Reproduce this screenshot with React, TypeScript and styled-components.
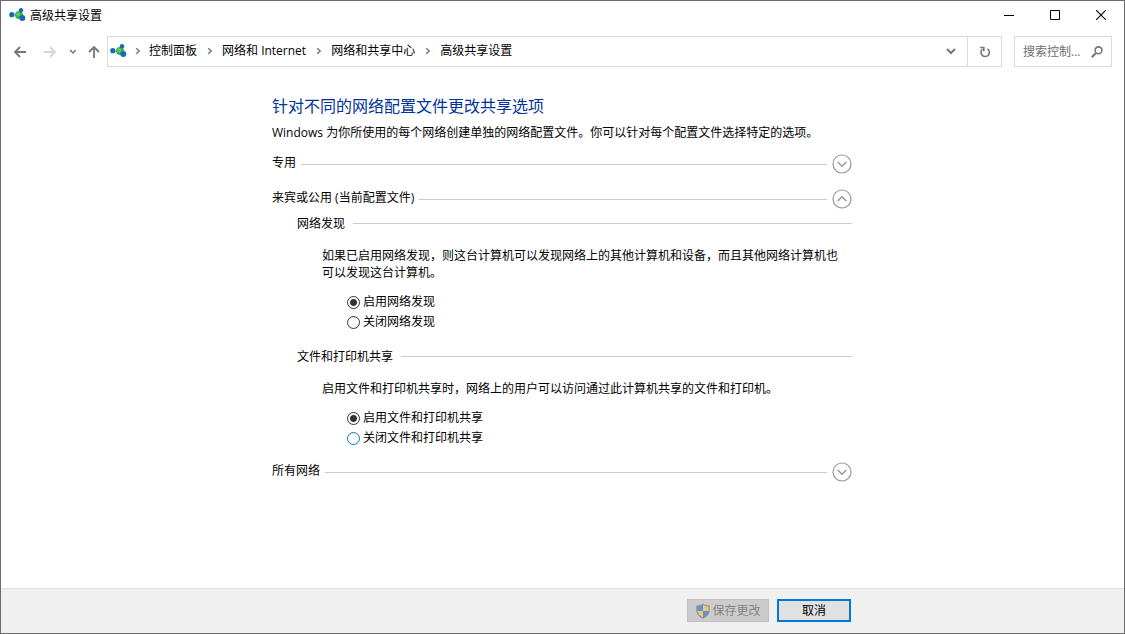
import React, { useState } from "react";
import styled, { createGlobalStyle } from "styled-components";

const GlobalStyle = createGlobalStyle`
  *, *::before, *::after { box-sizing: border-box; }
  body { margin: 0; background: #fff; }
  body, button, input {
    font-family: "Open Sans", "Noto Sans CJK SC", sans-serif;
    font-size: 12px;
    line-height: 17px;
    color: #000;
  }
`;

const Window = styled.div`
  display: flex;
  flex-direction: column;
  min-height: 100vh;
  border: 1px solid #6b6b6b;
  background: #fff;
`;

const TitleBar = styled.header`
  display: flex;
  align-items: center;
  height: 28px;
  padding-left: 8px;
`;

const WindowTitle = styled.span`
  flex: 1;
  padding-left: 4px;
`;

const CaptionButton = styled.button`
  display: flex;
  align-items: center;
  justify-content: center;
  width: 46px;
  height: 28px;
  padding: 0;
  border: 0;
  background: transparent;
`;

const NavBar = styled.nav`
  display: flex;
  align-items: center;
  padding: 7px 12px 0 4px;
`;

const NavButton = styled.button<{ $width: number }>`
  display: flex;
  align-items: center;
  justify-content: center;
  width: ${(p) => p.$width}px;
  height: 31px;
  padding: 0;
  border: 0;
  background: transparent;
`;

const AddressBar = styled.div`
  display: flex;
  flex: 1;
  align-items: center;
  height: 31px;
  margin-left: 1px;
  padding-left: 2px;
  border: 1px solid #d9d9d9;
`;

const Crumbs = styled.ol`
  display: flex;
  flex: 1;
  align-items: center;
  margin: 0;
  padding: 0 0 2px;
  list-style: none;
`;

const Crumb = styled.li`
  display: flex;
  align-items: center;
  white-space: nowrap;
`;

const CrumbLink = styled.a`
  color: #000;
  text-decoration: none;
`;

const CrumbArrow = styled.span<{ $first?: boolean }>`
  display: flex;
  align-items: center;
  justify-content: center;
  width: ${(p) => (p.$first ? 22 : 25)}px;
`;

const RefreshButton = styled(NavButton)`
  height: 29px;
  border-left: 1px solid #d9d9d9;
`;

const SearchBox = styled.label`
  display: flex;
  align-items: center;
  width: 98px;
  height: 31px;
  margin-left: 12px;
  padding: 0 8px;
  border: 1px solid #d9d9d9;
`;

const SearchInput = styled.input`
  flex: 1;
  min-width: 0;
  padding: 0;
  border: 0;
  outline: 0;
  background: transparent;
  &::placeholder {
    color: #6d6d6d;
    opacity: 1;
  }
`;

const Main = styled.main`
  flex: 1;
  width: 100%;
  max-width: 581px;
  margin: 0 auto;
  padding: 28px 1px 24px 0;
`;

const Heading = styled.h1`
  margin: 0;
  font-size: 16px;
  font-weight: 400;
  line-height: 22px;
  color: #003399;
`;

const Intro = styled.p`
  margin: 7px 0 13px;
`;

const Profile = styled.section`
  margin-bottom: 15px;
`;

const ProfileHeader = styled.div`
  display: flex;
  align-items: center;
  gap: 5px;
  height: 20px;
`;

const ProfileName = styled.h2`
  margin: 0;
  padding-bottom: 3px;
  font-size: 12px;
  font-weight: 400;
`;

const Rule = styled.span`
  flex: 1;
  height: 1px;
  background: #cacaca;
`;

const ExpandButton = styled.button`
  display: flex;
  width: 20px;
  height: 20px;
  padding: 0;
  border: 0;
  background: transparent;
`;

const Group = styled.fieldset`
  min-width: 0;
  margin: 5px 0 0;
  padding: 0 0 0 25px;
  border: 0;
  & + & {
    margin-top: 16px;
  }
`;

const GroupTitle = styled.legend`
  display: flex;
  align-items: center;
  gap: 8px;
  width: 100%;
  height: 18px;
  padding: 0;
`;

const Description = styled.p`
  margin: 0;
  padding: 15px 8px 10px 25px;
`;

const Option = styled.label`
  display: flex;
  align-items: center;
  gap: 3px;
  width: max-content;
  height: 20px;
  margin-left: 50px;
`;

const Radio = styled.input<{ $hot?: boolean }>`
  appearance: none;
  width: 13px;
  height: 13px;
  margin: 3px 0 0;
  border: 1px solid ${(p) => (p.$hot ? "#0078d7" : "#333")};
  border-radius: 50%;
  background: #fff;
  &:checked {
    background: radial-gradient(circle, #333 3px, #fff 4px);
  }
`;

const Footer = styled.footer`
  height: 45px;
  padding-top: 10px;
  border-top: 1px solid #dfdfdf;
  background: #f0f0f0;
`;

const Actions = styled.div`
  display: flex;
  justify-content: flex-end;
  gap: 8px;
  width: 100%;
  max-width: 581px;
  margin: 0 auto;
  padding-right: 2px;
`;

const ActionButton = styled.button<{ $primary?: boolean }>`
  display: flex;
  align-items: center;
  justify-content: center;
  gap: 1px;
  width: ${(p) => (p.$primary ? 74 : 82)}px;
  height: 23px;
  padding: 0;
  border: ${(p) => (p.$primary ? "2px solid #0078d7" : "1px solid #bfbfbf")};
  background: ${(p) => (p.$primary ? "#e1e1e1" : "#cccccc")};
  &:disabled {
    color: #838383;
  }
`;

const NetworkIcon = () => (
  <svg width="17" height="16" viewBox="0 0 17 16" aria-hidden="true">
    <path d="M3 8h7M10 8l2-5M10 8l3 3" stroke="#8cc4dd" strokeWidth="1" />
    <circle cx="10" cy="8" r="4" fill="#35b24a" />
    <circle cx="9.3" cy="7.3" r="2" fill="#5fcb62" />
    <circle cx="2.8" cy="7.7" r="2.6" fill="#1769b5" />
    <circle cx="12" cy="3.2" r="2.2" fill="#1769b5" />
    <circle cx="13.3" cy="11" r="3" fill="#1769b5" />
  </svg>
);

const Arrow = ({ d, color }: { d: string; color: string }) => (
  <svg width="14" height="14" viewBox="0 0 14 14" fill="none" stroke={color} strokeWidth="1.8" aria-hidden="true">
    <path d={d} />
  </svg>
);

const SmallChevron = () => (
  <svg width="6" height="8" viewBox="0 0 6 8" fill="none" stroke="#777" strokeWidth="1.5" aria-hidden="true">
    <path d="M1.2 1.2L4.2 4L1.2 6.8" />
  </svg>
);

const CircleChevron = ({ up }: { up?: boolean }) => (
  <svg width="20" height="20" viewBox="0 0 20 20" fill="none" stroke="#999" aria-hidden="true">
    <circle cx="10" cy="10" r="9" strokeWidth="1.2" />
    <path d={up ? "M5.7 12L10 7.7L14.3 12" : "M5.7 8L10 12.3L14.3 8"} strokeWidth="1.5" />
  </svg>
);

const Shield = () => (
  <svg width="16" height="16" viewBox="0 0 16 16" aria-hidden="true">
    <path d="M8 0.5C6 2 4 2.5 1.3 2.5V7C1.3 11 4 14 8 15.6C12 14 14.7 11 14.7 7V2.5C12 2.5 10 2 8 0.5Z" fill="#8e8e8e" />
    <path d="M8 1.8C6.2 3 4.6 3.5 2.4 3.6V8H8Z" fill="#6096cc" />
    <path d="M8 1.8C9.8 3 11.4 3.5 13.6 3.6V8H8Z" fill="#eac67c" />
    <path d="M2.4 8C2.8 11 5 13.2 8 14.4V8Z" fill="#eac67c" />
    <path d="M13.6 8C13.2 11 11 13.2 8 14.4V8Z" fill="#6096cc" />
  </svg>
);

const crumbs = ["控制面板", "网络和 Internet", "网络和共享中心", "高级共享设置"];

interface SettingProps {
  name: string;
  title: string;
  description: string;
  options: string[];
  hot?: number;
}

function Setting({ name, title, description, options, hot }: SettingProps) {
  const [selected, setSelected] = useState(0);
  return (
    <Group>
      <GroupTitle>
        {title}
        <Rule />
      </GroupTitle>
      <Description>{description}</Description>
      {options.map((label, i) => (
        <Option key={label}>
          <Radio
            type="radio"
            name={name}
            checked={selected === i}
            $hot={hot === i}
            onChange={() => setSelected(i)}
          />
          {label}
        </Option>
      ))}
    </Group>
  );
}

interface ProfileSectionProps {
  name: string;
  initiallyOpen?: boolean;
  children?: React.ReactNode;
}

function ProfileSection({ name, initiallyOpen = false, children }: ProfileSectionProps) {
  const [open, setOpen] = useState(initiallyOpen);
  return (
    <Profile>
      <ProfileHeader>
        <ProfileName>{name}</ProfileName>
        <Rule />
        <ExpandButton aria-label={name} aria-expanded={open} onClick={() => setOpen(!open)}>
          <CircleChevron up={open} />
        </ExpandButton>
      </ProfileHeader>
      {open && children}
    </Profile>
  );
}

export default function App() {
  return (
    <Window>
      <GlobalStyle />
      <TitleBar>
        <NetworkIcon />
        <WindowTitle>高级共享设置</WindowTitle>
        <CaptionButton aria-label="最小化">
          <svg width="10" height="10" shapeRendering="crispEdges" aria-hidden="true">
            <path d="M0 5.5H10" stroke="#000" />
          </svg>
        </CaptionButton>
        <CaptionButton aria-label="最大化">
          <svg width="10" height="10" aria-hidden="true">
            <path d="M0.5 0.5H9.5V9.5H0.5Z" fill="none" stroke="#000" />
          </svg>
        </CaptionButton>
        <CaptionButton aria-label="关闭">
          <svg width="10" height="10" aria-hidden="true">
            <path d="M0 0L10 10M10 0L0 10" stroke="#000" strokeWidth="1.1" />
          </svg>
        </CaptionButton>
      </TitleBar>
      <NavBar>
        <NavButton $width={30} aria-label="后退">
          <Arrow color="#777" d="M13 7H2M7 2L2 7L7 12" />
        </NavButton>
        <NavButton $width={30} aria-label="前进">
          <Arrow color="#d6d6d6" d="M1 7H12M7 2L12 7L7 12" />
        </NavButton>
        <NavButton $width={16} aria-label="最近的位置">
          <svg width="8" height="6" viewBox="0 0 8 6" fill="none" stroke="#777" strokeWidth="1.5" aria-hidden="true">
            <path d="M1.2 1L4 4L6.8 1" />
          </svg>
        </NavButton>
        <NavButton $width={25} aria-label="向上">
          <Arrow color="#777" d="M7 13V2M2 7L7 2L12 7" />
        </NavButton>
        <AddressBar>
          <Crumbs>
            <NetworkIcon />
            {crumbs.map((label, i) => (
              <Crumb key={label}>
                <CrumbArrow $first={i === 0}>
                  <SmallChevron />
                </CrumbArrow>
                <CrumbLink href="#">{label}</CrumbLink>
              </Crumb>
            ))}
          </Crumbs>
          <NavButton $width={32} aria-label="以前的位置">
            <svg width="10" height="7" viewBox="0 0 10 7" fill="none" stroke="#777" strokeWidth="2" aria-hidden="true">
              <path d="M1 1L5 5L9 1" />
            </svg>
          </NavButton>
          <RefreshButton $width={34} aria-label="刷新">
            <svg width="12" height="12" viewBox="0 0 12 12" fill="none" stroke="#777" strokeWidth="1.6" aria-hidden="true">
              <path d="M8.5 2.8A4.2 4.2 0 1 1 3.3 3.2" />
              <path d="M1.2 1.5H4.8V5.2" />
            </svg>
          </RefreshButton>
        </AddressBar>
        <SearchBox>
          <SearchInput type="text" aria-label="搜索控制面板" placeholder="搜索控制..." />
          <svg width="12" height="12" viewBox="0 0 12 12" fill="none" stroke="#777" aria-hidden="true">
            <circle cx="7.5" cy="4.3" r="3.4" strokeWidth="1.6" />
            <path d="M5 7L0.8 11.2" strokeWidth="2" />
          </svg>
        </SearchBox>
      </NavBar>
      <Main>
        <Heading>针对不同的网络配置文件更改共享选项</Heading>
        <Intro>Windows 为你所使用的每个网络创建单独的网络配置文件。你可以针对每个配置文件选择特定的选项。</Intro>
        <ProfileSection name="专用" />
        <ProfileSection name="来宾或公用 (当前配置文件)" initiallyOpen>
          <Setting
            name="discovery"
            title="网络发现"
            description="如果已启用网络发现，则这台计算机可以发现网络上的其他计算机和设备，而且其他网络计算机也可以发现这台计算机。"
            options={["启用网络发现", "关闭网络发现"]}
          />
          <Setting
            name="sharing"
            title="文件和打印机共享"
            description="启用文件和打印机共享时，网络上的用户可以访问通过此计算机共享的文件和打印机。"
            options={["启用文件和打印机共享", "关闭文件和打印机共享"]}
            hot={1}
          />
        </ProfileSection>
        <ProfileSection name="所有网络" />
      </Main>
      <Footer>
        <Actions>
          <ActionButton disabled>
            <Shield />
            保存更改
          </ActionButton>
          <ActionButton $primary>取消</ActionButton>
        </Actions>
      </Footer>
    </Window>
  );
}
